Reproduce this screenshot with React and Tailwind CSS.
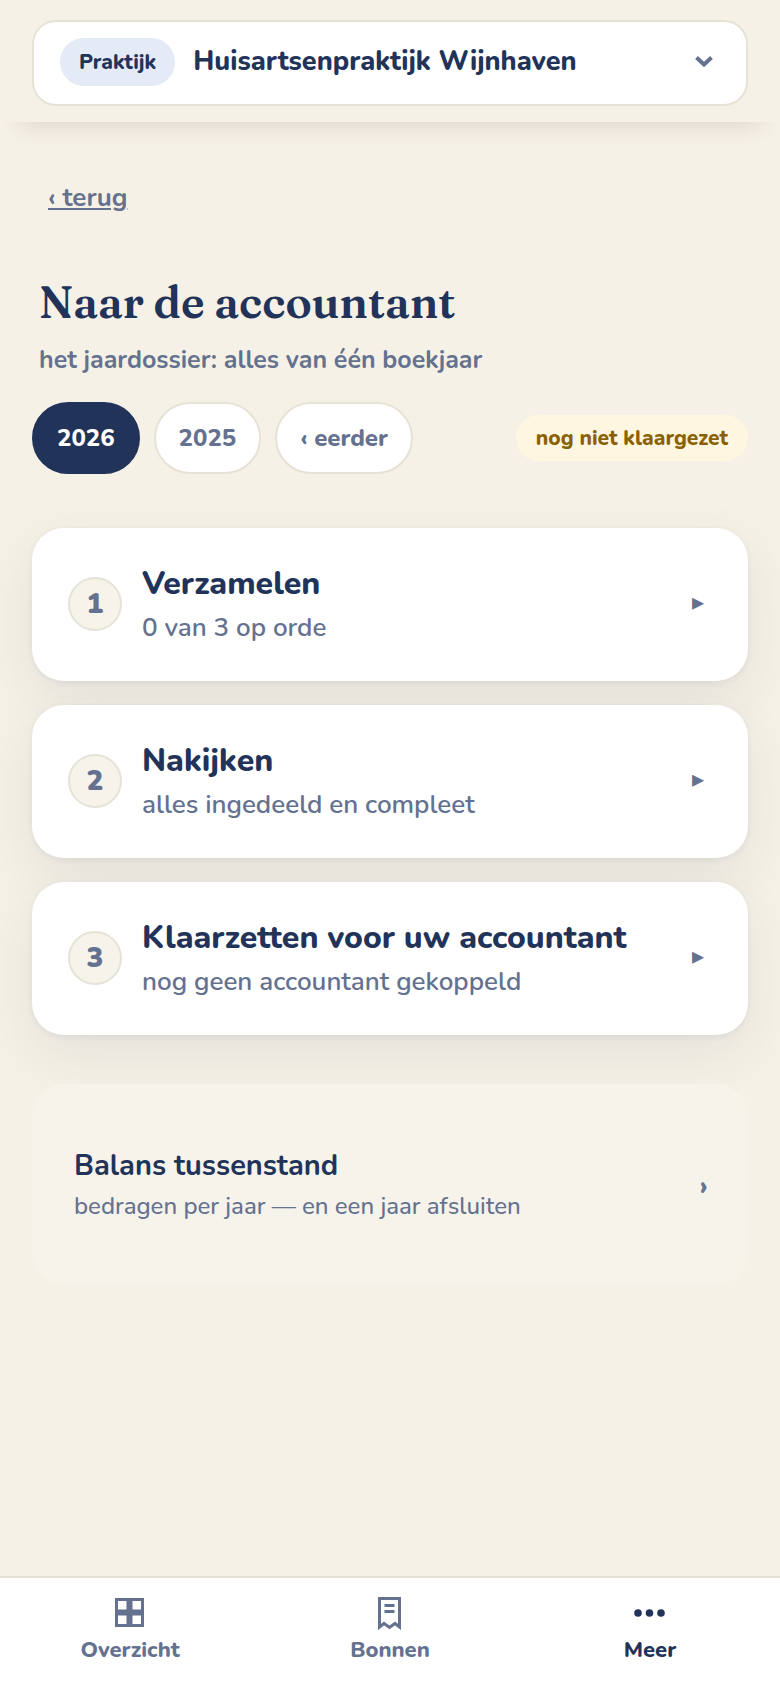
import React, { useState } from 'react';

const practices = ['Huisartsenpraktijk Wijnhaven'];

const years = ['2026', '2025', '‹ eerder'];

const steps = [
  { title: 'Verzamelen', detail: '0 van 3 op orde' },
  { title: 'Nakijken', detail: 'alles ingedeeld en compleet' },
  { title: 'Klaarzetten voor uw accountant', detail: 'nog geen accountant gekoppeld' },
];

const OverviewIcon = () => (
  <svg viewBox="0 0 36 36" className="h-9 w-9" fill="none" stroke="currentColor" aria-hidden="true">
    <path d="M4.500 5.500H30.500V31.500H4.500Z" strokeWidth="3" />
    <path d="M17.500 5V32M4 18.500H31" strokeWidth="6" />
  </svg>
);

const ReceiptIcon = () => (
  <svg viewBox="0 0 36 36" className="h-9 w-9" fill="none" stroke="currentColor" strokeWidth="3" aria-hidden="true">
    <path d="M7.500 4.500H27.500V33L23 29.500L17.500 33.500L12 29.500L7.500 33Z" />
    <path d="M12.500 11.500H22.500M12.500 17.500H22.500" />
  </svg>
);

const DotsIcon = () => (
  <svg viewBox="0 0 36 36" className="h-9 w-9" fill="currentColor" aria-hidden="true">
    <circle cx="6" cy="19" r="3.800" />
    <circle cx="17.500" cy="19" r="3.800" />
    <circle cx="29" cy="19" r="3.800" />
  </svg>
);

const tabs = [
  { label: 'Overzicht', Icon: OverviewIcon },
  { label: 'Bonnen', Icon: ReceiptIcon },
  { label: 'Meer', Icon: DotsIcon },
];

const PracticeHeader = () => (
  <header className="bg-[#f6f1e6] px-8 pt-5 pb-4 shadow-[0_22px_22px_-20px_rgba(60,50,30,0.15)]">
    <label className="relative flex h-[86px] items-center rounded-3xl border-2 border-[#e6e2d6] bg-white px-[26px]">
      <span className="mb-0.5 flex h-12 items-center rounded-full bg-[#e4eaf6] px-[19px] text-[21px] leading-7 font-extrabold">
        Praktijk
      </span>
      <select className="ml-[18px] mb-0.5 min-w-0 flex-1 appearance-none bg-transparent text-[27px] leading-9 font-extrabold focus:outline-none">
        {practices.map((name) => (
          <option key={name}>{name}</option>
        ))}
      </select>
      <svg viewBox="0 0 20 14" className="pointer-events-none absolute right-8 top-8 h-[14px] w-5" fill="none" stroke="#64718f" strokeWidth="4" aria-hidden="true">
        <path d="M2.500 3.500L10 10.500L17.500 3.500" />
      </svg>
    </label>
  </header>
);

const StepCard = ({ number, title, detail }) => (
  <li>
    <button
      type="button"
      className="flex w-full items-center rounded-4xl bg-white pt-8 pr-11 pb-[33px] pl-9 text-left shadow-[0_2px_6px_rgba(34,51,90,0.07),0_20px_56px_rgba(34,51,90,0.08)]"
    >
      <span className="flex h-[54px] w-[54px] shrink-0 items-center justify-center rounded-full border-2 border-[#e6e2d6] bg-[#f6f3eb] text-[28px] leading-8 font-black text-[#64718f]">
        {number}
      </span>
      <span className="ml-5 flex-1">
        <span className="block text-[32px] leading-[48px] font-extrabold">{title}</span>
        <span className="block text-[26px] leading-10 font-semibold text-[#64718f]">{detail}</span>
      </span>
      <span className="pb-1 text-[24px] leading-8 text-[#64718f]" aria-hidden="true">▸</span>
    </button>
  </li>
);

const App = () => {
  const [year, setYear] = useState(years[0]);
  const [activeTab, setActiveTab] = useState('Meer');

  return (
    <div className="flex min-h-screen flex-col bg-[#f6f1e6] font-[Nunito,Lato,sans-serif] text-[#22335a]">
      <PracticeHeader />

      <main className="flex-1 px-8 pb-10">
        <a href="#meer" className="mt-14 ml-4 inline-block text-[26px] leading-10 font-bold text-[#64718f] underline decoration-2 underline-offset-2">
          ‹ terug
        </a>

        <h1 className="mt-14 ml-[7px] font-[Fraunces,'Liberation_Serif',serif] text-[44px] leading-[56px] font-semibold">
          Naar de accountant
        </h1>
        <p className="mt-[10px] ml-[7px] text-[25px] leading-10 font-bold text-[#64718f]">
          het jaardossier: alles van één boekjaar
        </p>

        <div className="mt-[22px] flex items-center gap-[14px]">
          {years.map((item) => (
            <button
              key={item}
              type="button"
              aria-pressed={year === item}
              onClick={() => setYear(item)}
              className={`h-[72px] rounded-full border-2 px-[23px] text-[24px] leading-9 font-extrabold ${
                year === item
                  ? 'border-[#22335a] bg-[#22335a] text-white'
                  : 'border-[#e6e2d6] bg-white text-[#64718f]'
              }`}
            >
              {item}
            </button>
          ))}
          <span className="ml-auto flex h-[46px] items-center rounded-full bg-[#fff6e2] px-5 text-[21px] leading-7 font-extrabold text-[#8a6100]">
            nog niet klaargezet
          </span>
        </div>

        <ol className="mt-[54px] flex flex-col gap-6">
          {steps.map((step, index) => (
            <StepCard key={step.title} number={index + 1} {...step} />
          ))}
        </ol>

        <a href="#balans" className="relative mt-[49px] flex items-center justify-between rounded-4xl bg-[#f6f3eb] pt-[62px] pr-10 pb-[58px] pl-[42px]">
          <span>
            <span className="block text-[29px] leading-10 font-bold">Balans tussenstand</span>
            <span className="block text-[24px] leading-10 font-medium text-[#64718f]">
              bedragen per jaar — en een jaar afsluiten
            </span>
          </span>
          <span className="text-[28px] leading-8 font-extrabold text-[#64718f]" aria-hidden="true">›</span>
        </a>
      </main>

      <nav className="sticky bottom-0 grid h-28 grid-cols-3 border-t-2 border-[#e6e2d6] bg-white">
        {tabs.map(({ label, Icon }) => (
          <button
            key={label}
            type="button"
            aria-current={activeTab === label ? 'page' : undefined}
            onClick={() => setActiveTab(label)}
            className={`flex flex-col items-center pt-4 text-[22px] leading-10 font-extrabold ${
              activeTab === label ? 'text-[#22335a]' : 'text-[#64718f]'
            }`}
          >
            <Icon />
            {label}
          </button>
        ))}
      </nav>
    </div>
  );
};

export default App;
